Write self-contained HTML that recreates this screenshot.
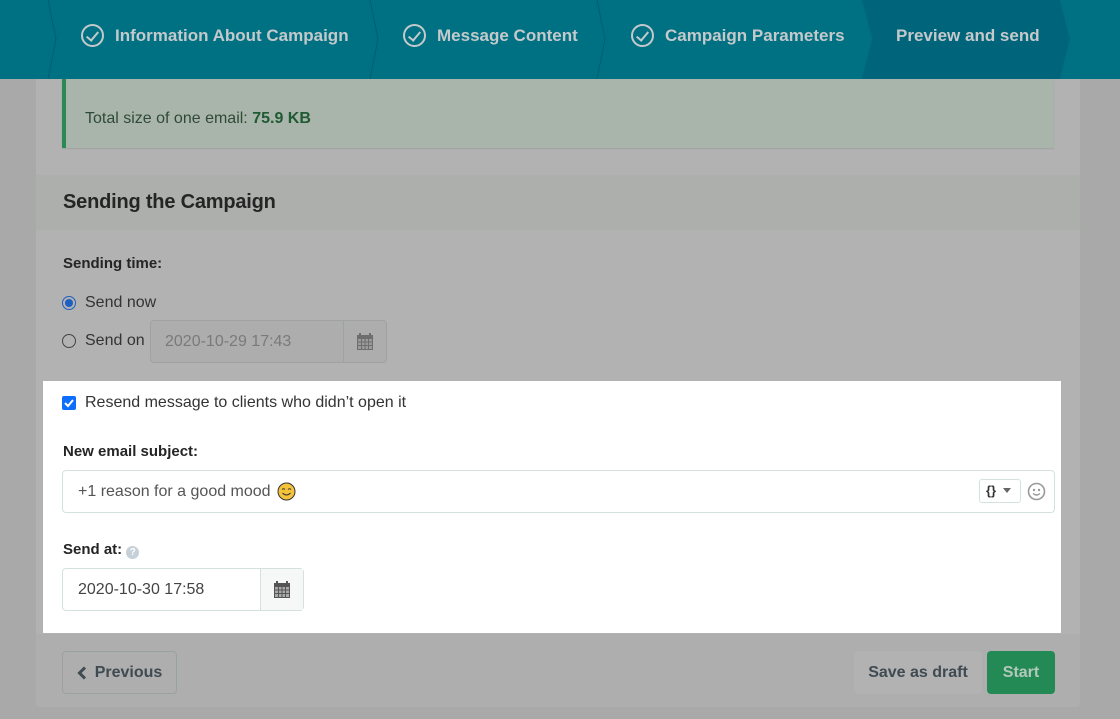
<!DOCTYPE html>
<html><head><meta charset="utf-8"><style>
*{box-sizing:border-box;margin:0;padding:0}
body{width:1120px;height:719px;overflow:hidden;background:#a9a9a9;font-family:"Liberation Sans",sans-serif;position:relative;color:#2a2a2a}
.a{position:absolute}
.nav{left:0;top:0;width:1120px;height:79px;background:#007183}
.step{top:0;height:71px;display:flex;align-items:center;color:#c4c9cb;font-weight:bold;font-size:17px}
.chk{width:23px;height:23px;border:2px solid #c4c9cb;border-radius:50%;margin-right:11px;position:relative}
.chk:after{content:"";position:absolute;left:6px;top:3px;width:5px;height:10px;border:solid #c4c9cb;border-width:0 2px 2px 0;transform:rotate(40deg)}
.inp{border:1px solid #9ea3a0;border-radius:4px;font-size:16px;display:flex;align-items:center}
</style></head><body>
<div class="a nav"></div>
<svg class="a" style="left:0;top:0" width="1120" height="79">
<polygon points="862,0 1060,0 1070,39 1060,79 862,79 872,39" fill="#00657a"/>
<polyline points="48,0 56,39 48,79" fill="none" stroke="#005f70" stroke-width="1"/>
<polyline points="370,0 378,39 370,79" fill="none" stroke="#005f70" stroke-width="1"/>
<polyline points="597,0 605,39 597,79" fill="none" stroke="#005f70" stroke-width="1"/>
</svg>
<div class="a step" style="left:81px"><span class="chk"></span>Information About Campaign</div>
<div class="a step" style="left:403px"><span class="chk"></span>Message Content</div>
<div class="a step" style="left:631px"><span class="chk"></span>Campaign Parameters</div>
<div class="a step" style="left:896px">Preview and send</div>

<div class="a" style="left:36px;top:79px;width:1044px;height:628px;background:#b2b2b2;border-radius:0 0 4px 4px"></div>
<div class="a" style="left:62px;top:79px;width:992px;height:69px;background:#a9b5ab;border-left:4px solid #2a8a55;box-shadow:0 1px 1px #a0a0a0"></div>
<div class="a" style="left:85px;top:110px;font-size:16px;color:#2f4a37">Total size of one email: <b style="color:#1f5a33">75.9 KB</b></div>

<div class="a" style="left:36px;top:175px;width:1044px;height:55px;background:#adafad"></div>
<div class="a" style="left:63px;top:191px;font-size:20px;font-weight:bold;color:#252525;letter-spacing:-0.2px">Sending the Campaign</div>
<div class="a" style="left:63px;top:255px;font-size:15px;font-weight:bold;color:#252525">Sending time:</div>
<div class="a" style="left:62px;top:296px;width:14px;height:14px;border-radius:50%;border:1px solid #1f5fc0;background:#b2b2b2"><div style="margin:2px;width:8px;height:8px;border-radius:50%;background:#1f5fc0"></div></div>
<div class="a" style="left:85px;top:294px;font-size:16px;color:#333">Send now</div>
<div class="a" style="left:62px;top:334px;width:14px;height:14px;border-radius:50%;border:1px solid #444"></div>
<div class="a" style="left:85px;top:332px;font-size:16px;color:#333">Send on</div>
<div class="a inp" style="left:150px;top:320px;width:237px;height:43px;background:#adadad">
 <span style="padding-left:14px;width:192px;color:#7a7a7a">2020-10-29 17:43</span>
 <span style="flex:1;height:100%;border-left:1px solid #9ea3a0;display:flex;align-items:center;justify-content:center"><svg width="16" height="17"><rect x="2" y="0" width="2" height="3" fill="#6e6e6e"/><rect x="12" y="0" width="2" height="3" fill="#6e6e6e"/><rect x="0" y="2" width="16" height="15" fill="#6e6e6e"/><rect x="1" y="6" width="14" height="10" fill="#9a9a9a"/><path d="M1 9h14M1 12.5h14M4.5 6v10M8 6v10M11.5 6v10" stroke="#6e6e6e"/></svg></span></div>

<div class="a" style="left:43px;top:381px;width:1018px;height:252px;background:#fff"></div>
<div class="a" style="left:62px;top:396px;width:14px;height:14px;border-radius:2px;background:#0d6efd"><svg width="14" height="14"><path d="M3 7l3 3 5-6" stroke="#fff" stroke-width="2" fill="none"/></svg></div>
<div class="a" style="left:85px;top:394px;font-size:16px;color:#333">Resend message to clients who didn’t open it</div>
<div class="a" style="left:63px;top:443px;font-size:15px;font-weight:bold;color:#252525">New email subject:</div>
<div class="a inp" style="left:62px;top:470px;width:993px;height:43px;border-color:#d3e2de;background:#fff">
 <span style="padding-left:15px;color:#555">+1 reason for a good mood</span>
 <svg style="margin-left:6px" width="19" height="19"><circle cx="9.5" cy="9.5" r="8.5" fill="#f5c33b" stroke="#333"/><path d="M5 7.5q1.5-1.5 3 0M11 7.5q1.5-1.5 3 0" stroke="#333" fill="none"/><path d="M5.5 11q4 4 8 0" stroke="#333" fill="none"/></svg>
</div>
<div class="a" style="left:979px;top:479px;width:42px;height:24px;border:1px solid #d3e2de;border-radius:3px;font-size:13px;font-weight:bold;color:#333;padding:3px 0 0 6px">{}<span style="display:inline-block;margin-left:7px;border:4px solid transparent;border-top:5px solid #666;vertical-align:-2px"></span></div>
<svg class="a" style="left:1027px;top:482px" width="19" height="19"><circle cx="9.5" cy="9.5" r="8" fill="none" stroke="#999" stroke-width="1.6"/><circle cx="7" cy="8" r="1.2" fill="#999"/><circle cx="12" cy="8" r="1.2" fill="#999"/><path d="M6 11.5q3.5 3 7 0" stroke="#999" stroke-width="1.4" fill="none"/></svg>
<div class="a" style="left:63px;top:541px;font-size:15px;font-weight:bold;color:#252525">Send at: <span style="display:inline-block;width:13px;height:13px;border-radius:50%;background:#c5d0d8;color:#fff;font-size:10px;text-align:center;line-height:13px;vertical-align:-1px">?</span></div>
<div class="a inp" style="left:62px;top:568px;width:242px;height:43px;border-color:#d3e2de;background:#fff">
 <span style="padding-left:15px;width:197px;color:#444">2020-10-30 17:58</span>
 <span style="flex:1;height:100%;background:#f6f7f7;border-left:1px solid #d3e2de;display:flex;align-items:center;justify-content:center"><svg width="16" height="17"><rect x="2" y="0" width="2" height="3" fill="#555"/><rect x="12" y="0" width="2" height="3" fill="#555"/><rect x="0" y="2" width="16" height="15" fill="#555"/><rect x="1" y="6" width="14" height="10" fill="#aaa"/><path d="M1 9h14M1 12.5h14M4.5 6v10M8 6v10M11.5 6v10" stroke="#555"/></svg></span></div>

<div class="a" style="left:36px;top:634px;width:1044px;height:73px;background:#adaead;border-radius:0 0 4px 4px"></div>
<div class="a" style="left:62px;top:651px;width:115px;height:43px;border:1px solid #98a3a0;border-radius:4px;font-size:16px;font-weight:bold;color:#3f4a52;display:flex;align-items:center;justify-content:center"><svg width="10" height="14" style="margin-right:8px"><path d="M8 1.5L2.5 7 8 12.5" stroke="#3f4a52" stroke-width="3" fill="none"/></svg>Previous</div>
<div class="a" style="left:854px;top:651px;width:128px;height:43px;background:#b2b2b2;border-radius:4px;font-size:16px;font-weight:bold;color:#3f4a52;display:flex;align-items:center;justify-content:center">Save as draft</div>
<div class="a" style="left:987px;top:651px;width:68px;height:43px;background:#238a55;border-radius:4px;font-size:16px;font-weight:bold;color:#b4c8bc;display:flex;align-items:center;justify-content:center">Start</div>
</body></html>
